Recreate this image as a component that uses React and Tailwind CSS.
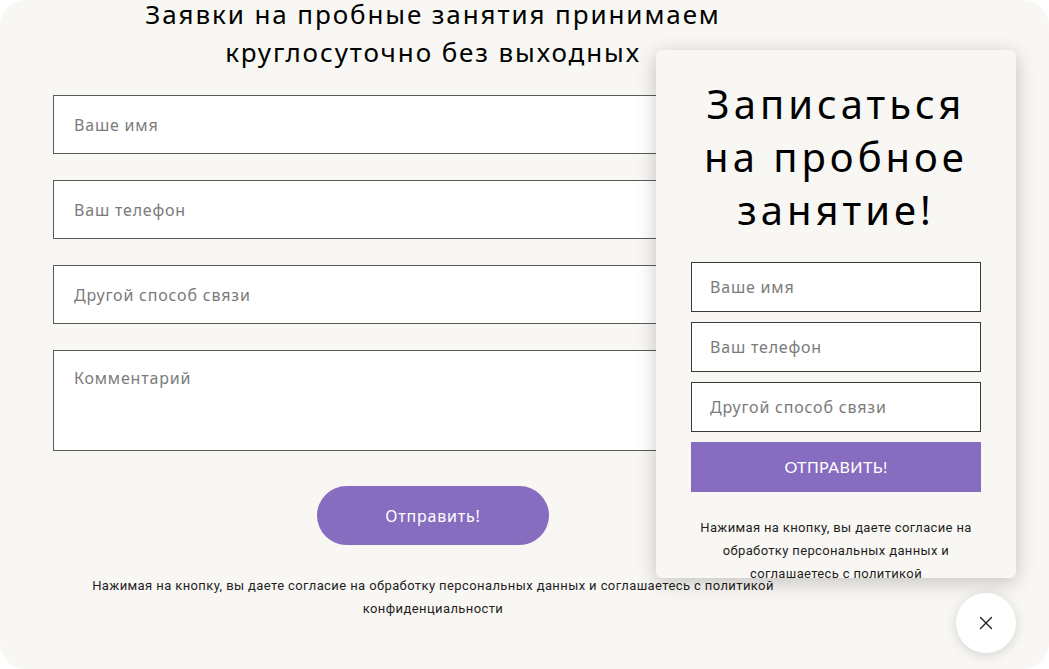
import React from "react";
import { X } from "lucide-react";

const roundFont = { fontFamily: '"Noto Sans", "DejaVu Sans", sans-serif' };

const fieldCls =
  "block w-full h-[59px] bg-white border border-[#5a5a5a] px-[20px] text-[16px] tracking-[0.8px] text-[#333] placeholder:text-[#7b7b7b] outline-none";

const popupFieldCls =
  "block w-full h-[50px] bg-white border border-[#3a3a3a] px-[18px] text-[16px] tracking-[0.8px] text-[#333] placeholder:text-[#7b7b7b] outline-none";

const App = () => {
  return (
    <div className="w-[1049px] h-[669px] bg-white overflow-hidden">
      <div className="relative w-full h-full bg-[#f9f7f4] rounded-[26px] overflow-hidden">
        {/* main form */}
        <div className="ml-[53px] w-[760px]" style={roundFont}>
          <h2 className="mt-[-5px] text-center text-[26px] leading-[38px] tracking-[1.9px] text-black">
            Заявки на пробные занятия принимаем
            <br />
            круглосуточно без выходных
          </h2>

          <form className="mt-[24px] flex flex-col gap-[26px]">
            <input className={fieldCls} placeholder="Ваше имя" />
            <input className={fieldCls} placeholder="Ваш телефон" />
            <input className={fieldCls} placeholder="Другой способ связи" />
            <textarea
              className="block w-full h-[101px] resize-none bg-white border border-[#5a5a5a] px-[20px] pt-[15px] text-[16px] tracking-[0.8px] placeholder:text-[#7b7b7b] outline-none"
              placeholder="Комментарий"
            />
          </form>

          <div className="mt-[35px] flex justify-center">
            <button className="w-[232px] h-[59px] rounded-full bg-[#876dc0] text-white text-[16px] tracking-[0.8px]">
              Отправить!
            </button>
          </div>

          <p
            className="mt-[29px] text-center text-[13px] leading-[23px] tracking-[0.4px] text-[#1e1e1e]"
            style={{ fontFamily: "Roboto, sans-serif" }}
          >
            Нажимая на кнопку, вы даете согласие на обработку персональных данных и соглашаетесь с политикой
            <br />
            конфиденциальности
          </p>
        </div>

        {/* popup */}
        <div
          className="absolute left-[656px] top-[50px] w-[360px] h-[528px] bg-[#f9f7f4] rounded-[6px] shadow-[0_4px_20px_rgba(0,0,0,0.22)] overflow-hidden px-[35px] pt-[27px]"
          style={roundFont}
        >
          <h3 className="text-center text-[40px] leading-[53px] tracking-[4px] text-black">
            Записаться
            <br />
            на пробное
            <br />
            занятие!
          </h3>

          <div className="mt-[26px] flex flex-col gap-[10px]">
            <input className={popupFieldCls} placeholder="Ваше имя" />
            <input className={popupFieldCls} placeholder="Ваш телефон" />
            <input className={popupFieldCls} placeholder="Другой способ связи" />
            <button
              className="h-[50px] w-full bg-[#876dc0] text-white text-[16px] tracking-[0.4px]"
              style={{ fontFamily: "Lato, sans-serif" }}
            >
              ОТПРАВИТЬ!
            </button>
          </div>

          <p
            className="mt-[24px] text-center text-[13px] leading-[23px] tracking-[0.35px] text-[#1e1e1e]"
            style={{ fontFamily: "Roboto, sans-serif" }}
          >
            Нажимая на кнопку, вы даете согласие на обработку персональных данных и соглашаетесь с политикой
            конфиденциальности
          </p>
        </div>

        {/* close */}
        <button className="absolute left-[956px] top-[593px] w-[60px] h-[60px] rounded-full bg-white shadow-[0_2px_12px_rgba(0,0,0,0.15)] flex items-center justify-center">
          <X size={22} strokeWidth={1.5} className="text-[#222]" />
        </button>
      </div>
    </div>
  );
};

export default App;
